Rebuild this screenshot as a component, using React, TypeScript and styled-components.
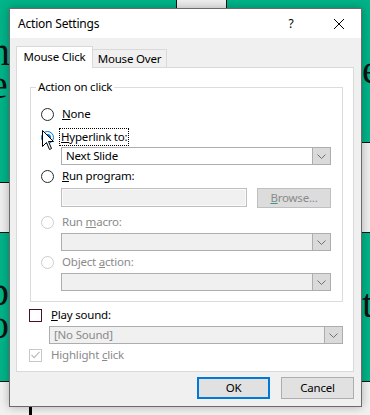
import React from "react";
import styled, { createGlobalStyle } from "styled-components";

const GlobalStyle = createGlobalStyle`
  html, body {
    margin: 0;
    padding: 0;
  }
  body {
    width: 370px;
    height: 415px;
    overflow: hidden;
    font-family: "Noto Sans", "Segoe UI", sans-serif;
    font-size: 11.5px;
    letter-spacing: -0.2px;
    color: #000;
  }
`;

const TEAL = "#00b388";
const CELL = "#eeeeee";

// ---------- slide behind the dialog ----------
const Page = styled.div`
  position: relative;
  width: 370px;
  height: 415px;
  overflow: hidden;
`;
const Backdrop = styled.div`
  display: flex;
  flex-direction: column;
  height: 100%;
`;
const Band = styled.div<{ $h: number }>`
  display: flex;
  height: ${(p) => p.$h}px;
  flex-shrink: 0;
`;
const Cell = styled.div<{ $bg: string; $w?: number; $top?: boolean; $bottom?: boolean }>`
  position: relative;
  box-sizing: border-box;
  ${(p) => (p.$w ? `width: ${p.$w}px; flex-shrink: 0;` : "flex: 1;")}
  background: ${(p) => p.$bg};
  border-top: ${(p) => (p.$top ? "1px solid #111" : "none")};
  border-bottom: ${(p) => (p.$bottom ? "1px solid #111" : "none")};
  overflow: hidden;
`;
const TopCell = styled.div`
  width: 49px;
  height: 8px;
  margin-left: 176px;
  background: ${CELL};
  border-left: 1px solid #111;
  border-right: 1px solid #111;
`;
// big serif letters of the slide, mostly hidden by the dialog
const SlideText = styled.div<{ $mt: number; $ml: number }>`
  margin-top: ${(p) => p.$mt}px;
  margin-left: ${(p) => p.$ml}px;
  font-family: "Liberation Serif", serif;
  font-size: 40px;
  line-height: 33px;
  letter-spacing: 0;
  white-space: pre;
  color: #111;
`;
const Rail = styled.div`
  width: 3px;
  height: 12px;
  margin: 22px 0 0 29px;
  background: #000;
`;

// ---------- dialog ----------
const Dialog = styled.div`
  position: absolute;
  left: 9px;
  top: 8px;
  width: 353px;
  height: 399px;
  box-sizing: border-box;
  border: 1px solid #6b6b6b;
  background: #f0f0f0;
  box-shadow: 0 0 9px rgba(0, 0, 0, 0.28);
  display: flex;
  flex-direction: column;
`;
const TitleBar = styled.div`
  height: 29px;
  flex-shrink: 0;
  background: #fff;
  display: flex;
  align-items: center;
  padding-left: 8px;
`;
const Title = styled.div`
  flex: 1;
  font-size: 12px;
`;
const HelpMark = styled.div`
  width: 10px;
  font-size: 12px;
  margin-right: 37px;
  text-align: center;
`;
const CloseBox = styled.div`
  width: 12px;
  height: 12px;
  margin-right: 16px;
  display: flex;
`;
const Body = styled.div`
  flex: 1;
  display: flex;
  flex-direction: column;
  padding: 8px 7px 7px 6px;
  min-height: 0;
`;
const Tabs = styled.div`
  display: flex;
  align-items: flex-end;
  height: 22px;
  margin-bottom: -1px;
  position: relative;
  z-index: 1;
`;
const Tab = styled.div<{ $active?: boolean }>`
  box-sizing: border-box;
  width: ${(p) => (p.$active ? 77 : 74)}px;
  height: ${(p) => (p.$active ? 22 : 19)}px;
  background: ${(p) => (p.$active ? "#fff" : "#f0f0f0")};
  border: 1px solid #d9d9d9;
  border-left: ${(p) => (p.$active ? "1px solid #d9d9d9" : "none")};
  border-bottom: ${(p) => (p.$active ? "none" : "1px solid #d9d9d9")};
  display: flex;
  align-items: ${(p) => (p.$active ? "flex-start" : "center")};
  justify-content: center;
  padding-top: ${(p) => (p.$active ? 2 : 0)}px;
  line-height: 16px;
`;
const Panel = styled.div`
  flex: 1;
  background: #fff;
  border: 1px solid #d9d9d9;
  display: flex;
  flex-direction: column;
  padding: 19px 10px 0 13px;
`;
const Group = styled.div`
  position: relative;
  border: 1px solid #dcdcdc;
  display: flex;
  flex-direction: column;
  padding: 0 11px 10px 10px;
`;
const Legend = styled.div`
  position: absolute;
  left: 5px;
  top: -9px;
  padding: 0 2px;
  background: #fff;
  line-height: 16px;
`;
const OptionRow = styled.div<{ $mt: number }>`
  display: flex;
  align-items: center;
  height: 18px;
  margin-top: ${(p) => p.$mt}px;
  gap: 7px;
`;
const RadioWrap = styled.div`
  position: relative;
  width: 13px;
  height: 13px;
  flex-shrink: 0;
`;
const RadioCircle = styled.div<{ $checked?: boolean; $disabled?: boolean }>`
  box-sizing: border-box;
  width: 13px;
  height: 13px;
  border-radius: 50%;
  border: 1px solid
    ${(p) => (p.$checked ? "#0078d7" : p.$disabled ? "#cccccc" : "#1f2d2a")};
  background: #fff;
  display: flex;
  align-items: center;
  justify-content: center;
`;
const RadioDot = styled.div`
  width: 7px;
  height: 7px;
  border-radius: 50%;
  background: #0078d7;
`;
const Cursor = styled.svg`
  position: absolute;
  left: 1px;
  top: -1px;
`;
const Label = styled.span<{ $disabled?: boolean; $focus?: boolean }>`
  color: ${(p) => (p.$disabled ? "#8a8a8a" : "#000")};
  line-height: 16px;
  padding: 0 1px;
  margin-left: ${(p) => (p.$focus ? -1 : 0)}px;
  outline: ${(p) => (p.$focus ? "1px dotted #000" : "none")};
  outline-offset: 0;
  u {
    text-decoration: underline;
    text-underline-offset: 1px;
  }
`;
const Combo = styled.div<{ $mt: number; $ml: number; $disabled?: boolean }>`
  display: flex;
  height: 18px;
  box-sizing: border-box;
  margin-top: ${(p) => p.$mt}px;
  margin-left: ${(p) => p.$ml}px;
  border: 1px solid #adadad;
  background: ${(p) => (p.$disabled ? "#f0f0f0" : "#fff")};
`;
const ComboValue = styled.div<{ $disabled?: boolean }>`
  flex: 1;
  padding-left: 4px;
  line-height: 16px;
  color: ${(p) => (p.$disabled ? "#8a8a8a" : "#000")};
`;
const ComboArrow = styled.div`
  width: 18px;
  box-sizing: border-box;
  background: #dadada;
  border-left: 1px solid #adadad;
  display: flex;
  align-items: center;
  justify-content: center;
`;
const ProgramRow = styled.div`
  display: flex;
  gap: 10px;
  margin-top: 3px;
  margin-left: 20px;
`;
const FieldBox = styled.div`
  width: 186px;
  height: 19px;
  box-sizing: border-box;
  border: 1px solid #bfbfbf;
  box-shadow: inset 0 0 0 1px #fafafa;
  background: #f0f0f0;
`;
const SmallButton = styled.div`
  flex: 1;
  height: 20px;
  box-sizing: border-box;
  border: 1px solid #bfbfbf;
  background: #dcdcdc;
  color: #8a8a8a;
  display: flex;
  align-items: center;
  justify-content: center;
  line-height: 16px;
  u {
    text-decoration-color: #2a9d8f;
  }
`;
const CheckRow = styled.div<{ $mt: number }>`
  display: flex;
  align-items: center;
  height: 18px;
  margin-top: ${(p) => p.$mt}px;
  margin-left: -1px;
  gap: 8px;
`;
const CheckBox = styled.div<{ $disabled?: boolean }>`
  box-sizing: border-box;
  width: 13px;
  height: 13px;
  border: 1px solid ${(p) => (p.$disabled ? "#c8c8c8" : "#4a1028")};
  background: #fff;
  display: flex;
  align-items: center;
  justify-content: center;
`;
const Buttons = styled.div`
  display: flex;
  justify-content: flex-end;
  gap: 11px;
  margin-top: 5px;
`;
const DialogButton = styled.div<{ $default?: boolean }>`
  width: 73px;
  height: 22px;
  box-sizing: border-box;
  border: ${(p) => (p.$default ? "2px solid #0078d7" : "1px solid #adadad")};
  background: #e1e1e1;
  display: flex;
  align-items: center;
  justify-content: center;
  line-height: 16px;
`;

const Chevron = () => (
  <svg width="9" height="5" viewBox="0 0 9 5">
    <path d="M0.5 0.5 L4.5 4.5 L8.5 0.5" fill="none" stroke="#707070" strokeWidth="1" />
  </svg>
);

const Radio = ({ checked, disabled, cursor }: any) => (
  <RadioWrap>
    <RadioCircle $checked={checked} $disabled={disabled}>
      {checked && <RadioDot />}
    </RadioCircle>
    {cursor && (
      <Cursor width="12" height="21" viewBox="0 0 12 21">
        <path
          d="M0.5 0.5 L0.5 16.5 L4.5 12.5 L7.5 19.5 L9.5 18.5 L6.5 11.5 L11.5 11.5 Z"
          fill="#fff"
          stroke="#000"
          strokeWidth="1"
          strokeLinejoin="miter"
        />
      </Cursor>
    )}
  </RadioWrap>
);

const App = () => {
  return (
    <Page>
      <GlobalStyle />
      <Backdrop>
        <Band $h={142}>
          <Cell $bg={TEAL}>
            <TopCell />
            <SlideText $mt={27} $ml={-10}>{"n\ne"}</SlideText>
          </Cell>
          <Cell $bg={TEAL} $w={120}>
            <SlideText $mt={53} $ml={112}>e</SlideText>
          </Cell>
        </Band>
        <Band $h={40}>
          <Cell $bg={TEAL} />
          <Cell $bg={CELL} $w={120} $top />
        </Band>
        <Band $h={51}>
          <Cell $bg={CELL} $top $bottom />
          <Cell $bg={CELL} $w={120} $bottom />
        </Band>
        <Band $h={148}>
          <Cell $bg={TEAL}>
            <SlideText $mt={42} $ml={-11}>{"p\no"}</SlideText>
          </Cell>
          <Cell $bg={TEAL} $w={120}>
            <SlideText $mt={54} $ml={112}>t</SlideText>
          </Cell>
        </Band>
        <Band $h={34}>
          <Cell $bg="#f1f1f1" $top>
            <Rail />
          </Cell>
        </Band>
      </Backdrop>

      <Dialog>
        <TitleBar>
          <Title>Action Settings</Title>
          <HelpMark>?</HelpMark>
          <CloseBox>
            <svg width="12" height="12" viewBox="0 0 12 12">
              <path d="M1 1 L11 11 M11 1 L1 11" stroke="#000" strokeWidth="1" />
            </svg>
          </CloseBox>
        </TitleBar>
        <Body>
          <Tabs>
            <Tab $active>Mouse Click</Tab>
            <Tab>Mouse Over</Tab>
          </Tabs>
          <Panel>
            <Group>
              <Legend>Action on click</Legend>
              <OptionRow $mt={17}>
                <Radio />
                <Label>
                  <u>N</u>one
                </Label>
              </OptionRow>
              <OptionRow $mt={5}>
                <Radio checked cursor />
                <Label $focus>
                  <u>H</u>yperlink to:
                </Label>
              </OptionRow>
              <Combo $mt={1} $ml={20}>
                <ComboValue>Next Slide</ComboValue>
                <ComboArrow>
                  <Chevron />
                </ComboArrow>
              </Combo>
              <OptionRow $mt={2}>
                <Radio />
                <Label>
                  <u>R</u>un program:
                </Label>
              </OptionRow>
              <ProgramRow>
                <FieldBox />
                <SmallButton>
                  <span>
                    <u>B</u>rowse...
                  </span>
                </SmallButton>
              </ProgramRow>
              <OptionRow $mt={5}>
                <Radio disabled />
                <Label $disabled>
                  Run <u>m</u>acro:
                </Label>
              </OptionRow>
              <Combo $mt={2} $ml={20} $disabled>
                <ComboValue $disabled />
                <ComboArrow>
                  <Chevron />
                </ComboArrow>
              </Combo>
              <OptionRow $mt={2}>
                <Radio disabled />
                <Label $disabled>
                  Object <u>a</u>ction:
                </Label>
              </OptionRow>
              <Combo $mt={2} $ml={20} $disabled>
                <ComboValue $disabled />
                <ComboArrow>
                  <Chevron />
                </ComboArrow>
              </Combo>
            </Group>
            <CheckRow $mt={4}>
              <CheckBox />
              <Label>
                <u>P</u>lay sound:
              </Label>
            </CheckRow>
            <Combo $mt={2} $ml={19} $disabled>
              <ComboValue $disabled>[No Sound]</ComboValue>
              <ComboArrow>
                <Chevron />
              </ComboArrow>
            </Combo>
            <CheckRow $mt={2}>
              <CheckBox $disabled>
                <svg width="9" height="8" viewBox="0 0 9 8">
                  <path d="M0.5 4 L3.2 6.7 L8.5 0.8" fill="none" stroke="#bdbdbd" strokeWidth="1.2" />
                </svg>
              </CheckBox>
              <Label $disabled>
                Highlight <u>c</u>lick
              </Label>
            </CheckRow>
          </Panel>
          <Buttons>
            <DialogButton $default>OK</DialogButton>
            <DialogButton>Cancel</DialogButton>
          </Buttons>
        </Body>
      </Dialog>
    </Page>
  );
};

export default App;
